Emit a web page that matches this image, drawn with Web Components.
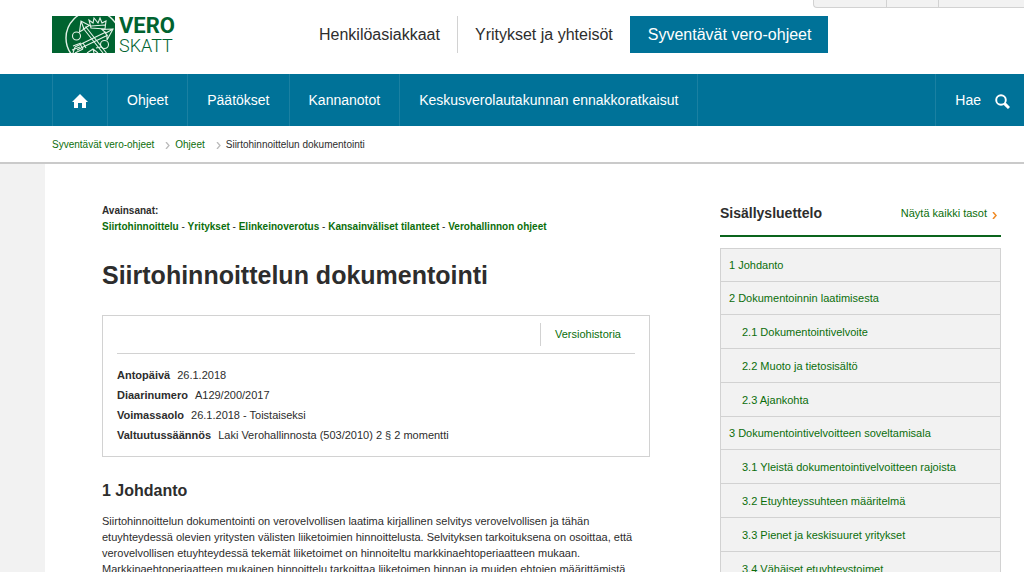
<!DOCTYPE html>
<html lang="fi">
<head>
<meta charset="utf-8">
<title>Siirtohinnoittelun dokumentointi</title>
<style>
  html { --blue: #007298; --green: #0b6e0b; --dark-green: #006330; --ink: #2d2d2d; --line: #d2d2d2; --panel: #f2f2f2; }
  body { margin: 0; font: 12px/16px "Liberation Sans", Arial, sans-serif; color: var(--ink); background: #fff; }
</style>
</head>
<body>
<vero-page></vero-page>
<script>
const define = (name, html) => customElements.define(name, class extends HTMLElement {
  constructor() {
    super();
    const t = document.createElement('template');
    t.innerHTML = html;
    this.attachShadow({ mode: 'open' }).appendChild(t.content.cloneNode(true));
  }
});

define('vero-logo', `
<style>
  :host { display: block; }
  a { display: flex; gap: 4px; text-decoration: none; color: var(--dark-green); }
  svg { display: block; width: 63px; height: 37px; }
  .words { display: flex; flex-direction: column; }
  b { font: bold 22px/20px "Roboto", sans-serif; }
  span { font: 300 18px/20px "Roboto", sans-serif; }
</style>
<a href="#" aria-label="VERO SKATT">
  <svg viewBox="0 0 63 37" fill="none" stroke="#e4f2e8" stroke-width="1.1">
    <rect width="63" height="37" fill="#006330" stroke="none"/>
    <circle cx="41" cy="22" r="27" stroke-width="1.4"/>
    <circle cx="24.500" cy="20" r="4"/><circle cx="52.500" cy="28.500" r="4"/>
    <path d="M31 12l20 25M33.500 10.500l21 26.500M29 5l-1.500 11 4-2.500 3-2.500 3-1.500zM29 5l3 8"/>
    <path d="M23 31l31-15M25 34l31-15M61 13l-11 .500 3.500 3 1.500 3.500 0 4zM61 13l-8 4.500"/>
    <path d="M21 30l8-3M20 34l8-3M23 37l8-4M23 31l-2 6M28 28l3 5M31 27l3 5"/>
    <path d="M39 12l-2-8 4 3 1-5 4 5 2-5 2 5 4-2-1 8zM39 10l14-1"/>
    <path d="M35 37l6-4 5 4M41 33l1 4M49 31l-5 1"/>
  </svg>
  <div class="words"><b>VERO</b><span>SKATT</span></div>
</a>`);

define('service-tabs', `
<style>
  :host { display: block; flex: none; }
  nav { display: flex; font-size: 16px; line-height: 37px; white-space: nowrap; }
  a { color: var(--ink); text-decoration: none; padding: 0 17px; }
  a + a { border-left: 1px solid var(--line); }
  a[aria-current] { background: var(--blue); color: #fff; border-color: var(--blue); }
</style>
<nav><a href="#">Henkilöasiakkaat</a><a href="#">Yritykset ja yhteisöt</a><a href="#" aria-current="page">Syventävät vero-ohjeet</a></nav>`);

define('utility-bar', `
<style>
  :host { display: flex; flex: none; width: 211px; height: 8px; box-sizing: border-box; background: var(--panel); border: 1px solid var(--line); border-width: 0 0 1px 1px; border-radius: 0 0 0 4px; }
  i { width: 72px; border-right: 1px solid var(--line); }
  i + i { width: 51px; }
</style><i></i><i></i>`);

define('main-menu', `
<style>
  :host { display: flex; background: var(--blue); height: 52px; padding-left: 52px; font-size: 14px; line-height: 52px; }
  nav { display: flex; flex: 1; white-space: nowrap; }
  a, button { color: #fff; text-decoration: none; border: 0 solid #1a80a2; padding: 0 19px; font: inherit; background: none; }
  a { border-right-width: 1px; }
  a.home { border-left-width: 1px; display: flex; align-items: center; }
  .home svg { width: 16px; height: 14px; padding-top: 2px; }
  button { border-left-width: 1px; display: flex; align-items: center; gap: 14px; padding-right: 14px; }
  button svg { width: 15px; height: 15px; padding-top: 2px; }
</style>
<nav>
  <a class="home" href="#" aria-label="Etusivu"><svg viewBox="0 0 16 14"><path fill="#fff" d="M8 0L0 8h2v6h4V9h4v5h4V8h2z"/></svg></a>
  <a href="#">Ohjeet</a><a href="#">Päätökset</a><a href="#">Kannanotot</a><a href="#">Keskusverolautakunnan ennakkoratkaisut</a>
</nav>
<button type="button">Hae<svg viewBox="0 0 15 15" fill="none" stroke="#fff"><circle cx="6" cy="6" r="4.8" stroke-width="1.9"/><path stroke-width="3" d="M9.6 9.6L14 14"/></svg></button>`);

define('bread-crumbs', `
<style>
  :host { display: block; border-bottom: 2px solid #cacaca; box-shadow: 0 1px 1px #e6e6e6; padding: 11px 52px 9px; font-size: 10px; }
  nav { display: flex; }
  a { color: var(--green); text-decoration: none; display: flex; align-items: center; }
  svg { width: 5px; height: 7px; margin: 0 5px 0 11px; }
</style>
<nav aria-label="Murupolku"><a href="#">Syventävät vero-ohjeet<svg viewBox="0 0 5 7"><path d="M1 0l3 3.500-3 3.500" fill="none" stroke="#bbb" stroke-width="1.300"/></svg></a><a href="#">Ohjeet<svg viewBox="0 0 5 7"><path d="M1 0l3 3.500-3 3.500" fill="none" stroke="#bbb" stroke-width="1.300"/></svg></a><span>Siirtohinnoittelun dokumentointi</span></nav>`);

define('key-words', `
<style>
  :host { display: block; font-size: 10px; font-weight: bold; }
  p { margin: 0; }
  a { color: var(--green); text-decoration: none; }
  .links { font-weight: normal; }
  .links a { font-weight: bold; }
</style>
<p>Avainsanat:</p>
<p class="links"><a href="#">Siirtohinnoittelu</a> - <a href="#">Yritykset</a> - <a href="#">Elinkeinoverotus</a> - <a href="#">Kansainväliset tilanteet</a> - <a href="#">Verohallinnon ohjeet</a></p>`);

define('document-info', `
<style>
  :host { display: block; border: 1px solid var(--line); padding: 7px 14px 11px; font-size: 11px; }
  header { display: flex; justify-content: flex-end; border-bottom: 1px solid var(--line); padding-bottom: 7px; margin-bottom: 11px; }
  header a { color: var(--green); text-decoration: none; border-left: 1px solid var(--line); padding: 0 14px; line-height: 23px; }
  dl { margin: 0; }
  dl div { display: flex; gap: 7px; line-height: 20px; }
  dt { font-weight: bold; }
  dd { margin: 0; }
</style>
<header><a href="#">Versiohistoria</a></header>
<dl>
  <div><dt>Antopäivä</dt><dd>26.1.2018</dd></div>
  <div><dt>Diaarinumero</dt><dd>A129/200/2017</dd></div>
  <div><dt>Voimassaolo</dt><dd>26.1.2018 - Toistaiseksi</dd></div>
  <div><dt>Valtuutussäännös</dt><dd>Laki Verohallinnosta (503/2010) 2 § 2 momentti</dd></div>
</dl>`);

define('toc-item', `
<style>
  :host { display: block; border-bottom: 1px solid var(--line); padding: 8px; line-height: 16px; }
  :host([sub]) { padding: 9px 8px 8px 21px; }
  a { color: var(--green); text-decoration: none; }
</style><a href="#"><slot></slot></a>`);

define('table-of-contents', `
<style>
  :host { display: block; font-size: 11px; }
  header { display: flex; justify-content: space-between; align-items: center; height: 42px; box-sizing: border-box; border-bottom: 2px solid #0a641c; padding: 0 4px 4px 0; margin-bottom: 11px; }
  h2 { margin: 0; font-size: 14px; line-height: 20px; }
  header a { display: flex; align-items: center; gap: 5px; color: var(--green); text-decoration: none; }
  svg { width: 5px; height: 7px; padding-top: 4px; }
  nav { background: var(--panel); border: 1px solid var(--line); border-bottom: 0; }
</style>
<header><h2>Sisällysluettelo</h2><a href="#">Näytä kaikki tasot<svg viewBox="0 0 5 7"><path d="M1 0l3 3.500-3 3.500" fill="none" stroke="#f08a24" stroke-width="1.500"/></svg></a></header>
<nav>
  <toc-item>1 Johdanto</toc-item>
  <toc-item>2 Dokumentoinnin laatimisesta</toc-item>
  <toc-item sub>2.1 Dokumentointivelvoite</toc-item>
  <toc-item sub>2.2 Muoto ja tietosisältö</toc-item>
  <toc-item sub>2.3 Ajankohta</toc-item>
  <toc-item>3 Dokumentointivelvoitteen soveltamisala</toc-item>
  <toc-item sub>3.1 Yleistä dokumentointivelvoitteen rajoista</toc-item>
  <toc-item sub>3.2 Etuyhteyssuhteen määritelmä</toc-item>
  <toc-item sub>3.3 Pienet ja keskisuuret yritykset</toc-item>
  <toc-item sub>3.4 Vähäiset etuyhteystoimet</toc-item>
</nav>`);

define('guide-article', `
<style>
  :host { display: block; }
  h1 { margin: 24px 0; font-size: 25px; line-height: 32px; }
  h2 { margin: 22px 0 10px; font-size: 16px; line-height: 24px; }
  p { margin: 0; font-size: 11px; line-height: 16px; }
</style>
<key-words></key-words>
<h1>Siirtohinnoittelun dokumentointi</h1>
<document-info></document-info>
<h2>1 Johdanto</h2>
<p>Siirtohinnoittelun dokumentointi on verovelvollisen laatima kirjallinen selvitys verovelvollisen ja tähän etuyhteydessä olevien yritysten välisten liiketoimien hinnoittelusta. Selvityksen tarkoituksena on osoittaa, että verovelvollisen etuyhteydessä tekemät liiketoimet on hinnoiteltu markkinaehtoperiaatteen mukaan. Markkinaehtoperiaatteen mukainen hinnoittelu tarkoittaa liiketoimen hinnan ja muiden ehtojen määrittämistä</p>`);

define('vero-page', `
<style>
  :host { display: block; }
  .top { display: flex; align-items: flex-start; height: 74px; box-sizing: border-box; }
  vero-logo { flex: none; margin: 16px 0 0 52px; width: 250px; }
  service-tabs { margin-top: 16px; }
  /* The utility bar hangs from the top edge, over the header's right corner. */
  utility-bar { position: absolute; top: 0; right: 0; }
  .back { background: var(--panel); padding-left: 45px; }
  main { display: grid; grid-template-columns: minmax(0, 1fr) 281px; gap: 70px; background: #fff; padding: 39px 23px 20px 57px; }
  table-of-contents { margin-top: -8px; }
</style>
<div class="top"><vero-logo></vero-logo><service-tabs></service-tabs><utility-bar></utility-bar></div>
<main-menu></main-menu>
<bread-crumbs></bread-crumbs>
<div class="back"><main><guide-article></guide-article><table-of-contents></table-of-contents></main></div>`);
</script>
</body>
</html>
